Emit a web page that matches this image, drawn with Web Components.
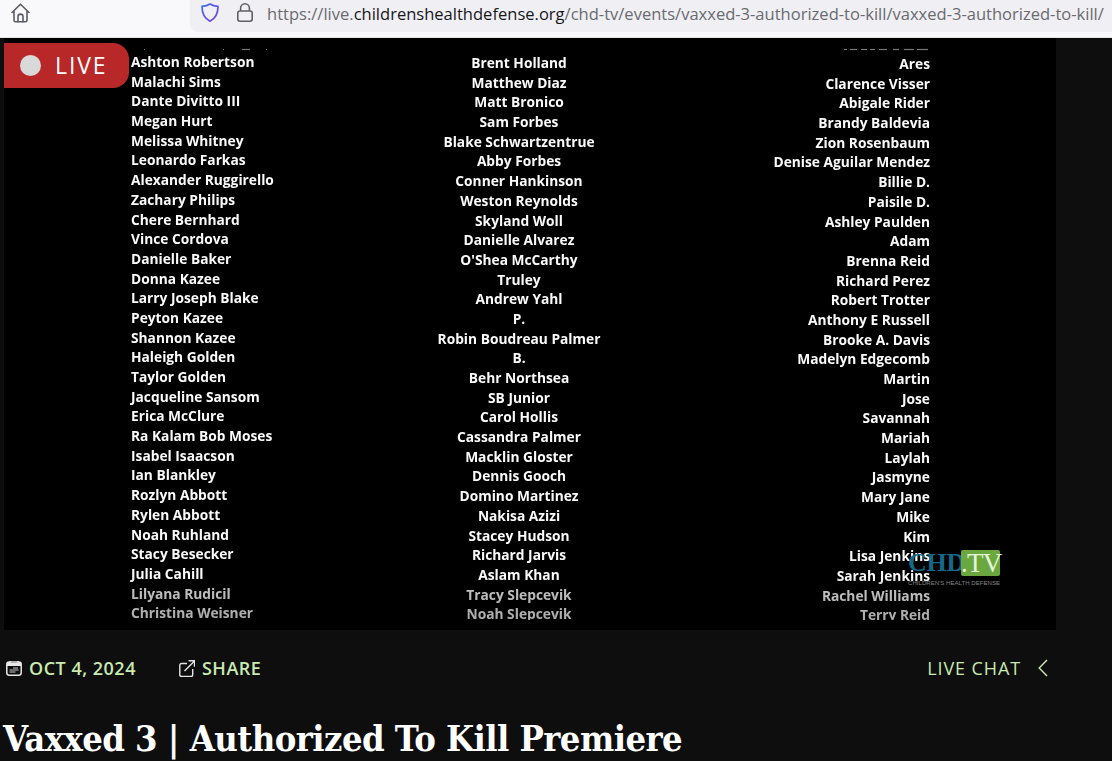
<!DOCTYPE html>
<html lang="en"><head><meta charset="utf-8"><title>Vaxxed 3</title>
<style>
html,body{margin:0;height:761px;overflow:hidden;background:#0e0e0e}
body{display:flex;flex-direction:column;font-family:"Open Sans",sans-serif}
</style></head><body>
<browser-bar>
  <span slot="host">https://live.</span><b slot="host">childrenshealthdefense.org</b><span slot="host">/chd-tv/events/vaxxed-3-authorized-to-kill/vaxxed-3-authorized-to-kill/</span>
</browser-bar>
<video-player>
  <credit-column slot="c1" align="left" offset="0" frag="13-14,92-93,111-119,135-136">
    <credit-name>Ashton Robertson</credit-name><credit-name>Malachi Sims</credit-name><credit-name>Dante Divitto III</credit-name><credit-name>Megan Hurt</credit-name><credit-name>Melissa Whitney</credit-name><credit-name>Leonardo Farkas</credit-name><credit-name>Alexander Ruggirello</credit-name><credit-name>Zachary Philips</credit-name><credit-name>Chere Bernhard</credit-name><credit-name>Vince Cordova</credit-name><credit-name>Danielle Baker</credit-name><credit-name>Donna Kazee</credit-name><credit-name>Larry Joseph Blake</credit-name><credit-name>Peyton Kazee</credit-name><credit-name>Shannon Kazee</credit-name><credit-name>Haleigh Golden</credit-name><credit-name>Taylor Golden</credit-name><credit-name>Jacqueline Sansom</credit-name><credit-name>Erica McClure</credit-name><credit-name>Ra Kalam Bob Moses</credit-name><credit-name>Isabel Isaacson</credit-name><credit-name>Ian Blankley</credit-name><credit-name>Rozlyn Abbott</credit-name><credit-name>Rylen Abbott</credit-name><credit-name>Noah Ruhland</credit-name><credit-name>Stacy Besecker</credit-name><credit-name>Julia Cahill</credit-name><credit-name>Lilyana Rudicil</credit-name><credit-name>Christina Weisner</credit-name>
  </credit-column>
  <credit-column slot="c2" align="center" offset="1" frag="">
    <credit-name>Brent Holland</credit-name><credit-name>Matthew Diaz</credit-name><credit-name>Matt Bronico</credit-name><credit-name>Sam Forbes</credit-name><credit-name>Blake Schwartzentrue</credit-name><credit-name>Abby Forbes</credit-name><credit-name>Conner Hankinson</credit-name><credit-name>Weston Reynolds</credit-name><credit-name>Skyland Woll</credit-name><credit-name>Danielle Alvarez</credit-name><credit-name>O'Shea McCarthy</credit-name><credit-name>Truley</credit-name><credit-name>Andrew Yahl</credit-name><credit-name>P.</credit-name><credit-name>Robin Boudreau Palmer</credit-name><credit-name>B.</credit-name><credit-name>Behr Northsea</credit-name><credit-name>SB Junior</credit-name><credit-name>Carol Hollis</credit-name><credit-name>Cassandra Palmer</credit-name><credit-name>Macklin Gloster</credit-name><credit-name>Dennis Gooch</credit-name><credit-name>Domino Martinez</credit-name><credit-name>Nakisa Azizi</credit-name><credit-name>Stacey Hudson</credit-name><credit-name>Richard Jarvis</credit-name><credit-name>Aslam Khan</credit-name><credit-name>Tracy Slepcevik</credit-name><credit-name>Noah Slepcevik</credit-name>
  </credit-column>
  <credit-column slot="c3" align="right" offset="2" frag="137-140,143-150,154-160,163-168,172-180,186-192,197-207,210-221">
    <credit-name>Ares</credit-name><credit-name>Clarence Visser</credit-name><credit-name>Abigale Rider</credit-name><credit-name>Brandy Baldevia</credit-name><credit-name>Zion Rosenbaum</credit-name><credit-name>Denise Aguilar Mendez</credit-name><credit-name>Billie D.</credit-name><credit-name>Paisile D.</credit-name><credit-name>Ashley Paulden</credit-name><credit-name>Adam</credit-name><credit-name>Brenna Reid</credit-name><credit-name>Richard Perez</credit-name><credit-name>Robert Trotter</credit-name><credit-name>Anthony E Russell</credit-name><credit-name>Brooke A. Davis</credit-name><credit-name>Madelyn Edgecomb</credit-name><credit-name>Martin</credit-name><credit-name>Jose</credit-name><credit-name>Savannah</credit-name><credit-name>Mariah</credit-name><credit-name>Laylah</credit-name><credit-name>Jasmyne</credit-name><credit-name>Mary Jane</credit-name><credit-name>Mike</credit-name><credit-name>Kim</credit-name><credit-name>Lisa Jenkins</credit-name><credit-name>Sarah Jenkins</credit-name><credit-name>Rachel Williams</credit-name><credit-name>Terry Reid</credit-name>
  </credit-column>
  <live-badge slot="over"></live-badge>
  <chd-logo slot="over"></chd-logo>
</video-player>
<action-row></action-row>
<page-title>Vaxxed 3 | Authorized To Kill Premiere</page-title>
<script>
function def(name, css, html, extra){
  customElements.define(name, class extends HTMLElement{
    constructor(){super();const r=this.attachShadow({mode:'open'});r.innerHTML='<style>'+css+'</style>'+html;}
    connectedCallback(){if(extra)extra.call(this)}
  });
}
def('browser-bar',`
:host{display:flex;flex:none;height:37px;background:#f9f9fb;border-bottom:1px solid #e4e4e7;box-sizing:content-box;padding-left:11px;align-items:flex-start;overflow:hidden}
.home{width:19px;height:20px;margin-top:3px;flex:none}
.url{flex:none;margin-left:160px;width:922px;height:32px;background:#f0f0f4;border-bottom-left-radius:8px;display:flex;align-items:flex-start;color:#6a6a70;font:400 16.54px/26px "Open Sans",sans-serif;white-space:nowrap}
.shield{margin:3px 0 0 11px;width:18px;height:19px;flex:none}
.lock{margin:3px 0 0 18px;width:16px;height:19px;flex:none}
.t{margin:1px 0 0 14px}
::slotted(b){font-weight:400;color:#17171a}
`,`<svg class="home" viewBox="0 0 19 20" fill="none" stroke="#5b5b66" stroke-width="1.6" stroke-linejoin="round" stroke-linecap="round"><path d="M1 9.5 9.5 1.2 18 9.5M3 8v9.2c0 1 .7 1.6 1.6 1.6h9.8c.9 0 1.6-.6 1.6-1.6V8"/><path d="M7 18.6v-5a2.5 2.5 0 0 1 5 0v5"/></svg>
<div class="url"><svg class="shield" viewBox="0 0 18 19" fill="none" stroke-width="1.7"><defs><linearGradient id="g" x1="0" y1="0" x2="1" y2="1"><stop offset="0" stop-color="#3d6cf0"/><stop offset="1" stop-color="#7a3fe0"/></linearGradient></defs><path stroke="url(#g)" stroke-linejoin="round" d="M9 1c2 1.400 4.800 2.200 8 2.300 0 7.300-2 12-8 14.900C3 15.300 1 10.600 1 3.300 4.200 3.200 7 2.400 9 1Z"/></svg>
<svg class="lock" viewBox="0 0 16 19" fill="none" stroke="#5f5f67" stroke-width="1.6"><rect x=".8" y="8" width="14.400" height="10.200" rx="2.200"/><path d="M3.600 8V5.200a4.400 4.400 0 0 1 8.800 0V8"/></svg>
<div class="t"><slot name="host"></slot></div></div>`);
def('video-player',`
:host{display:block;flex:none;margin-left:4px;width:1052px;height:592px;background:#000;position:relative;overflow:hidden}
.credits{height:582px;overflow:hidden;display:grid;grid-template-columns:200px 376px 223px;padding-left:127px;-webkit-mask-image:linear-gradient(#000 0,#000 540px,rgba(0,0,0,.78) 548px,rgba(0,0,0,.68) 582px);mask-image:linear-gradient(#000 0,#000 540px,rgba(0,0,0,.78) 548px,rgba(0,0,0,.68) 582px);filter:blur(.4px)}
`,`<div class="credits"><slot name="c1"></slot><slot name="c2"></slot><slot name="c3"></slot></div><slot name="over"></slot>`);
def('credit-column',`
:host{display:block;color:#fafafa;font:700 13.760px/19.680px "Open Sans",sans-serif;white-space:nowrap}
.frag{height:14px;display:block}
`,`<svg class="frag" width="223" height="14" stroke="#777" stroke-width="1.200"></svg><slot></slot>`,function(){
  this.style.textAlign=this.getAttribute('align');
  this.style.paddingTop=this.getAttribute('offset')+'px';
  const off=+this.getAttribute('offset');
  this.shadowRoot.querySelector('svg').innerHTML=(this.getAttribute('frag')||'').split(',').filter(Boolean).map(s=>{const [a,b]=s.split('-');return `<line x1="${a}" x2="${b}" y1="${11.5-off}" y2="${11.5-off}"/>`}).join('');
});
def('credit-name',`:host{display:block}`,`<slot></slot>`);
def('live-badge',`
:host{position:absolute;left:0;top:5px;width:125px;height:45px;background:#b92828;border-radius:0 16px 16px 0;display:flex;align-items:center;padding-left:16px;box-sizing:border-box;color:#fff;font:400 23px/45px "Open Sans",sans-serif;letter-spacing:1.900px}
i{width:21px;height:21px;border-radius:50%;background:#d9d9d9;margin-right:14px}
`,`<i></i><span>LIVE</span>`);
def('chd-logo',`
:host{position:absolute;left:904px;top:512px;width:94px;display:block;white-space:nowrap}
.top{display:flex;align-items:center;height:26px}
.c{font:700 26px/26px "Liberation Serif",serif;color:#176788;width:53px;letter-spacing:-.2px}
.t{width:39px;height:26px;background:#6aa83f;border-radius:2px;color:#e6f3da;font:400 27px/27px "Liberation Serif",serif;text-align:center;letter-spacing:-.8px}
.s{font:400 6.100px/8px "Liberation Sans",sans-serif;color:#858585;margin-top:3px}
`,`<div class="top"><span class="c">CHD</span><span class="t">.TV</span></div><div class="s">CHILDREN'S HEALTH DEFENSE</div>`);
def('action-row',`
:host{display:flex;flex:none;height:76px;align-items:center;padding:0 64px 0 6px;color:#c9eab0;font:600 18px/24px "Open Sans",sans-serif;letter-spacing:.5px}
.d{display:flex;align-items:center;gap:7px}
.s{margin-left:43px;gap:7px}
svg{flex:none}
.r{margin-left:auto;font-weight:500;gap:17px;letter-spacing:.9px}
`,`<span class="d"><svg width="16" height="16" viewBox="0 0 16 16" fill="none"><rect x=".8" y="2" width="14.400" height="13.200" rx="2.400" stroke="#e8e8e8" stroke-width="1.500"/><path d="M.8 4.500h14.400" stroke="#e8e8e8" stroke-width="3"/><path d="M4 1v2M12 1v2" stroke="#e8e8e8" stroke-width="1.500"/><path d="M7 8h5M3.500 10h9M3.500 12h6" stroke="#c8c8c8" stroke-width="1"/></svg>OCT 4, 2024</span>
<span class="d s"><svg width="16" height="17" viewBox="0 0 16 17" fill="none" stroke="#e4e4e4" stroke-width="1.400"><path d="M8 3.500H2.500A1.700 1.700 0 0 0 .8 5.200v9.600c0 1 .7 1.700 1.700 1.700h9.500c1 0 1.700-.7 1.700-1.700V9"/><path d="M5.500 11 15.300 1.200M9.500 .8h6v6"/></svg>SHARE</span>
<span class="d r">LIVE CHAT<svg width="10" height="18" viewBox="0 0 10 18" fill="none" stroke="#c9eab0" stroke-width="1.400"><path d="M9 1 1.200 9 9 17"/></svg></span>`);
def('page-title',`
:host{display:block;flex:none;padding:0 0 0 3px;color:#fff;font:700 36px/64px "DejaVu Serif Condensed","DejaVu Serif",serif;white-space:nowrap;letter-spacing:-.55px}
`,`<slot></slot>`);
</script>
</body></html>
